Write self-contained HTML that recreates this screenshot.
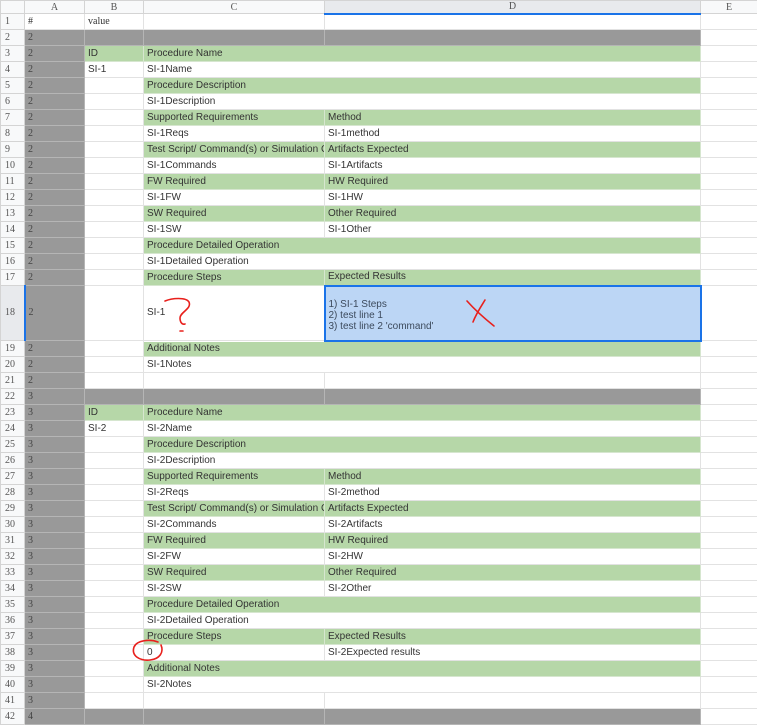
<!DOCTYPE html>
<html><head><meta charset="utf-8"><style>
html,body{margin:0;padding:0;background:#fff;width:757px;height:718px;overflow:hidden}
table{border-collapse:collapse;table-layout:fixed;position:absolute;left:0;top:0;width:757px}
td{height:16px;padding:0 0 0 3px;border:1px solid #e2e2e2;font:10px/12px "Liberation Sans",sans-serif;color:#333;white-space:nowrap;overflow:hidden;vertical-align:middle;box-sizing:border-box}
td.h{background:#f8f9fa;color:#555;font:10px/12px "Liberation Serif",serif;padding:0;border-color:#d4d4d4}
td.rn{text-align:left;padding-left:4px}
td.ch{text-align:center;height:13px;line-height:11px}
td.a{background:#999;color:#444;font-family:"Liberation Serif",serif;border-color:#b5b5b5}
td.k{background:#999;border-color:#b5b5b5}
td.g{background:#b6d7a8;border-color:#d6e6cf}
tr{height:16px}
td.sel{background:#bcd6f5;border:2px solid #1a73e8;vertical-align:middle}
td.serif{font-family:"Liberation Serif",serif}
</style></head><body>
<table>
<colgroup><col style="width:24px"><col style="width:60px"><col style="width:59px"><col style="width:181px"><col style="width:376px"><col style="width:57px"></colgroup>
<tr style="height:13px"><td class="h ch"></td><td class="h ch">A</td><td class="h ch">B</td><td class="h ch">C</td><td class="h ch" style="background:#e8eaed;border-bottom:2px solid #1a73e8">D</td><td class="h ch">E</td></tr>
<tr><td class="h rn">1</td><td class="serif">#</td><td class="serif">value</td><td></td><td></td><td></td></tr>
<tr><td class="h rn">2</td><td class="a">2</td><td class="k"></td><td class="k"></td><td class="k"></td><td></td></tr>
<tr><td class="h rn">3</td><td class="a">2</td><td class="g">ID</td><td class="g" colspan="2">Procedure Name</td><td></td></tr>
<tr><td class="h rn">4</td><td class="a">2</td><td>SI-1</td><td colspan="2">SI-1Name</td><td></td></tr>
<tr><td class="h rn">5</td><td class="a">2</td><td></td><td class="g" colspan="2">Procedure Description</td><td></td></tr>
<tr><td class="h rn">6</td><td class="a">2</td><td></td><td colspan="2">SI-1Description</td><td></td></tr>
<tr><td class="h rn">7</td><td class="a">2</td><td></td><td class="g">Supported Requirements</td><td class="g">Method</td><td></td></tr>
<tr><td class="h rn">8</td><td class="a">2</td><td></td><td>SI-1Reqs</td><td>SI-1method</td><td></td></tr>
<tr><td class="h rn">9</td><td class="a">2</td><td></td><td class="g">Test Script/ Command(s) or Simulation Co</td><td class="g">Artifacts Expected</td><td></td></tr>
<tr><td class="h rn">10</td><td class="a">2</td><td></td><td>SI-1Commands</td><td>SI-1Artifacts</td><td></td></tr>
<tr><td class="h rn">11</td><td class="a">2</td><td></td><td class="g">FW Required</td><td class="g">HW Required</td><td></td></tr>
<tr><td class="h rn">12</td><td class="a">2</td><td></td><td>SI-1FW</td><td>SI-1HW</td><td></td></tr>
<tr><td class="h rn">13</td><td class="a">2</td><td></td><td class="g">SW Required</td><td class="g">Other Required</td><td></td></tr>
<tr><td class="h rn">14</td><td class="a">2</td><td></td><td>SI-1SW</td><td>SI-1Other</td><td></td></tr>
<tr><td class="h rn">15</td><td class="a">2</td><td></td><td class="g" colspan="2">Procedure Detailed Operation</td><td></td></tr>
<tr><td class="h rn">16</td><td class="a">2</td><td></td><td colspan="2">SI-1Detailed Operation</td><td></td></tr>
<tr><td class="h rn">17</td><td class="a">2</td><td></td><td class="g">Procedure Steps</td><td class="g">Expected Results</td><td></td></tr>
<tr style="height:55px"><td class="h rn" style="height:55px;background:#e8eaed;border-right:2px solid #1a73e8">18</td><td class="a">2</td><td></td><td>SI-1</td><td class="sel" style="line-height:11px;color:#3c4a5c;padding-top:4px">1) SI-1 Steps<br>2) test line 1<br>3) test line 2 'command'</td><td></td></tr>
<tr><td class="h rn">19</td><td class="a">2</td><td></td><td class="g" colspan="2">Additional Notes</td><td></td></tr>
<tr><td class="h rn">20</td><td class="a">2</td><td></td><td colspan="2">SI-1Notes</td><td></td></tr>
<tr><td class="h rn">21</td><td class="a">2</td><td></td><td></td><td></td><td></td></tr>
<tr><td class="h rn">22</td><td class="a">3</td><td class="k"></td><td class="k"></td><td class="k"></td><td></td></tr>
<tr><td class="h rn">23</td><td class="a">3</td><td class="g">ID</td><td class="g" colspan="2">Procedure Name</td><td></td></tr>
<tr><td class="h rn">24</td><td class="a">3</td><td>SI-2</td><td colspan="2">SI-2Name</td><td></td></tr>
<tr><td class="h rn">25</td><td class="a">3</td><td></td><td class="g" colspan="2">Procedure Description</td><td></td></tr>
<tr><td class="h rn">26</td><td class="a">3</td><td></td><td colspan="2">SI-2Description</td><td></td></tr>
<tr><td class="h rn">27</td><td class="a">3</td><td></td><td class="g">Supported Requirements</td><td class="g">Method</td><td></td></tr>
<tr><td class="h rn">28</td><td class="a">3</td><td></td><td>SI-2Reqs</td><td>SI-2method</td><td></td></tr>
<tr><td class="h rn">29</td><td class="a">3</td><td></td><td class="g">Test Script/ Command(s) or Simulation Co</td><td class="g">Artifacts Expected</td><td></td></tr>
<tr><td class="h rn">30</td><td class="a">3</td><td></td><td>SI-2Commands</td><td>SI-2Artifacts</td><td></td></tr>
<tr><td class="h rn">31</td><td class="a">3</td><td></td><td class="g">FW Required</td><td class="g">HW Required</td><td></td></tr>
<tr><td class="h rn">32</td><td class="a">3</td><td></td><td>SI-2FW</td><td>SI-2HW</td><td></td></tr>
<tr><td class="h rn">33</td><td class="a">3</td><td></td><td class="g">SW Required</td><td class="g">Other Required</td><td></td></tr>
<tr><td class="h rn">34</td><td class="a">3</td><td></td><td>SI-2SW</td><td>SI-2Other</td><td></td></tr>
<tr><td class="h rn">35</td><td class="a">3</td><td></td><td class="g" colspan="2">Procedure Detailed Operation</td><td></td></tr>
<tr><td class="h rn">36</td><td class="a">3</td><td></td><td colspan="2">SI-2Detailed Operation</td><td></td></tr>
<tr><td class="h rn">37</td><td class="a">3</td><td></td><td class="g">Procedure Steps</td><td class="g">Expected Results</td><td></td></tr>
<tr><td class="h rn">38</td><td class="a">3</td><td></td><td>0</td><td>SI-2Expected results</td><td></td></tr>
<tr><td class="h rn">39</td><td class="a">3</td><td></td><td class="g" colspan="2">Additional Notes</td><td></td></tr>
<tr><td class="h rn">40</td><td class="a">3</td><td></td><td colspan="2">SI-2Notes</td><td></td></tr>
<tr><td class="h rn">41</td><td class="a">3</td><td></td><td></td><td></td><td></td></tr>
<tr><td class="h rn">42</td><td class="a">4</td><td class="k"></td><td class="k"></td><td class="k"></td><td></td></tr>
</table>
<svg width="757" height="718" style="position:absolute;left:0;top:0" fill="none" stroke="#e8201c" stroke-width="1.6" stroke-linecap="round">
<path d="M165 301 C172 298 186 297 189 302 C192 309 180 312 180 318 C180 322 182 325 185 324"/>
<path d="M180 331 L183 331"/>
<path d="M467 301 C475 310 484 318 494 326"/>
<path d="M485 300 C480 308 476 314 473 322"/>
<path d="M158 642 C150 639 137 640 134 647 C131 656 140 661 150 660 C160 659 164 652 161 645"/>
</svg>
</body></html>
